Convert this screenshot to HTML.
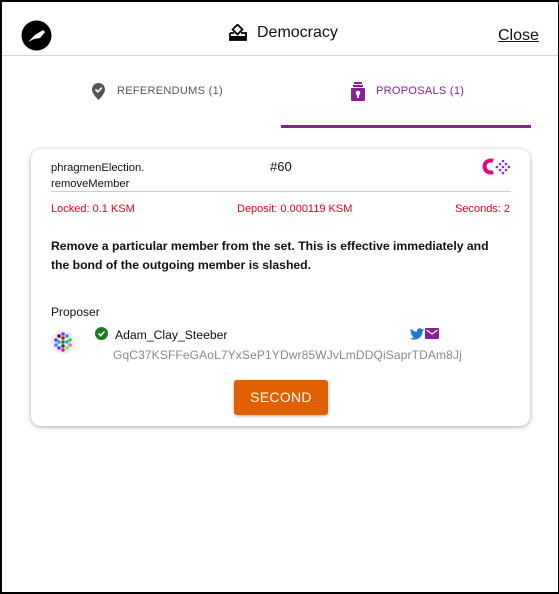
<!DOCTYPE html>
<html><head><meta charset="utf-8"><style>
*{box-sizing:border-box;margin:0;padding:0}
body{width:559px;height:594px;overflow:hidden;font-family:"Liberation Sans",sans-serif;background:#fff}
.frame{position:absolute;left:0;top:0;width:559px;height:594px;border:2px solid #000;border-right-width:1px}
.abs{position:absolute}
</style></head><body>
<div class="frame"></div>
<svg class="abs" style="left:21px;top:20px" width="31" height="31" viewBox="0 0 31 31"><circle cx="15.5" cy="15.5" r="15" fill="#000"/><path d="M7 22 L14 15 L22 10 L24 12 L19 18 L13 19 Z" fill="#fff"/></svg>
<svg class="abs" style="left:229px;top:24px" width="18" height="17" viewBox="0 0 18 17"><rect x="5" y="2" width="7" height="7" transform="rotate(45 8.5 5.5)" fill="none" stroke="#000" stroke-width="1.8"/><path d="M1 9 h4 M12 9 h5 v7 H1 v-7 M1 13 h16" stroke="#000" stroke-width="1.8" fill="none"/><rect x="1" y="12" width="16" height="4" fill="#000"/></svg>
<div class="abs" style="left:257px;top:24px;font-size:16px;color:#111">Democracy</div>
<div class="abs" style="left:498px;top:27px;font-size:16px;color:#111;text-decoration:underline">Close</div>
<div class="abs" style="left:2px;top:55px;width:556px;height:1px;background:#d6d6d6"></div>
<svg class="abs" style="left:92px;top:83px" width="13" height="17" viewBox="0 0 13 17"><path d="M6.5 0 C2.9 0 0 2.9 0 6.5 C0 11 6.5 17 6.5 17 C6.5 17 13 11 13 6.5 C13 2.9 10.1 0 6.5 0Z" fill="#555"/><path d="M3.5 6.5 L5.8 8.8 L9.8 4.6" stroke="#fff" stroke-width="1.6" fill="none"/></svg>
<div class="abs" style="left:117px;top:85px;font-size:11px;color:#555;letter-spacing:.3px">REFERENDUMS (1)</div>
<svg class="abs" style="left:351px;top:82px" width="14" height="19" viewBox="0 0 14 19"><rect x="3" y="0" width="8" height="2" fill="#8b1f96"/><rect x="2" y="3" width="10" height="2" fill="#8b1f96"/><rect x="0" y="6" width="14" height="13" rx="1" fill="#8b1f96"/><circle cx="7" cy="11" r="2.3" fill="#fff"/><rect x="6" y="12" width="2" height="4" fill="#fff"/></svg>
<div class="abs" style="left:376px;top:85px;font-size:11px;color:#8b1f96;letter-spacing:.3px">PROPOSALS (1)</div>
<div class="abs" style="left:281px;top:125px;width:250px;height:3px;background:#8b1f96"></div>
<div class="abs" style="left:31px;top:149px;width:499px;height:277px;border-radius:10px;box-shadow:0 1px 5px rgba(0,0,0,.35);background:#fff"></div>
<div class="abs" style="left:51px;top:160px;font-size:11.2px;line-height:16px;color:#111">phragmenElection.<br>removeMember</div>
<div class="abs" style="left:270px;top:159px;font-size:13px;color:#111">#60</div>
<svg class="abs" style="left:481px;top:158px" width="31" height="17" viewBox="0 0 31 17"><path d="M12 3 A6 6 0 1 0 12 14" stroke="#e6007a" stroke-width="4" fill="none"/><g fill="#8a2be2"><circle cx="22" cy="3" r="1.3"/><circle cx="19" cy="6" r="1.3"/><circle cx="25" cy="6" r="1.3"/><circle cx="16" cy="9" r="1.3"/><circle cx="28" cy="9" r="1.3"/><circle cx="19" cy="12" r="1.3"/><circle cx="25" cy="12" r="1.3"/><circle cx="22" cy="15" r="1.3"/><circle cx="22" cy="9" r="1.3"/></g></svg>
<div class="abs" style="left:51px;top:191px;width:460px;height:1px;background:#ccc"></div>
<div class="abs" style="left:51px;top:203px;font-size:11px;color:#e8001c">Locked: 0.1 KSM</div>
<div class="abs" style="left:237px;top:203px;font-size:11px;color:#e8001c">Deposit: 0.000119 KSM</div>
<div class="abs" style="left:455px;top:203px;font-size:11px;color:#e8001c">Seconds: 2</div>
<div class="abs" style="left:51px;top:237px;width:445px;font-size:12.2px;line-height:19px;font-weight:bold;color:#111">Remove a particular member from the set. This is effective immediately and the bond of the outgoing member is slashed.</div>
<div class="abs" style="left:51px;top:305px;font-size:12px;color:#111">Proposer</div>
<svg class="abs" style="left:51px;top:330px" width="24" height="24" viewBox="0 0 24 24"><circle cx="12" cy="12" r="12" fill="#eee"/><g><circle cx="12" cy="4" r="1.8" fill="#a020f0"/><circle cx="8" cy="6" r="1.8" fill="#222"/><circle cx="16" cy="6" r="1.8" fill="#1e90ff"/><circle cx="5" cy="10" r="1.8" fill="#a020f0"/><circle cx="12" cy="8" r="1.8" fill="#c8102e"/><circle cx="19" cy="10" r="1.8" fill="#32cd32"/><circle cx="8" cy="12" r="1.8" fill="#20b2aa"/><circle cx="16" cy="12" r="1.8" fill="#20b2aa"/><circle cx="12" cy="12" r="1.8" fill="#228b22"/><circle cx="5" cy="15" r="1.8" fill="#1e90ff"/><circle cx="19" cy="15" r="1.8" fill="#da70d6"/><circle cx="12" cy="16" r="1.8" fill="#1e3a8a"/><circle cx="8" cy="18" r="1.8" fill="#a020f0"/><circle cx="16" cy="18" r="1.8" fill="#7cfc00"/><circle cx="12" cy="20" r="1.8" fill="#c020c0"/></g></svg>
<svg class="abs" style="left:95px;top:327px" width="13" height="13" viewBox="0 0 13 13"><circle cx="6.5" cy="6.5" r="6.5" fill="#1b7a1b"/><path d="M3.5 6.5 L5.6 8.6 L9.5 4.5" stroke="#fff" stroke-width="1.6" fill="none"/></svg>
<div class="abs" style="left:115px;top:328px;font-size:12.2px;color:#111">Adam_Clay_Steeber</div>
<svg class="abs" style="left:410px;top:328px" width="14" height="12" viewBox="0 0 24 20"><path d="M24 2.4c-.9.4-1.8.7-2.8.8 1-.6 1.8-1.6 2.2-2.7-1 .6-2 1-3.1 1.2C19.4.7 18.1.1 16.7.1c-2.7 0-4.9 2.2-4.9 4.9 0 .4 0 .8.1 1.1C7.8 5.9 4.2 4 1.7 1 1.3 1.7 1 2.6 1 3.5c0 1.7.9 3.2 2.2 4.1-.8 0-1.6-.2-2.2-.6v.1c0 2.4 1.7 4.4 3.9 4.8-.4.1-.8.2-1.3.2-.3 0-.6 0-.9-.1.6 2 2.4 3.4 4.6 3.4-1.7 1.3-3.800 2.1-6.1 2.1-.4 0-.8 0-1.2-.1 2.2 1.4 4.8 2.2 7.5 2.2 9.1 0 14-7.5 14-14v-.6c1-.7 1.8-1.6 2.5-2.6z" fill="#1d7ad2"/></svg>
<svg class="abs" style="left:425px;top:328px" width="14" height="11" viewBox="0 0 14 11"><rect width="14" height="11" rx="1" fill="#8b1f96"/><path d="M1.5 2 L7 6 L12.5 2" stroke="#fff" stroke-width="1.3" fill="none"/></svg>
<div class="abs" style="left:113px;top:348px;font-size:12px;color:#888;letter-spacing:.13px">GqC37KSFFeGAoL7YxSeP1YDwr85WJvLmDDQiSaprTDAm8Jj</div>
<div class="abs" style="left:234px;top:380px;width:94px;height:35px;background:#e06000;border-radius:3px;box-shadow:0 1px 3px rgba(0,0,0,.3);color:#fff;font-size:14px;text-align:center;line-height:35px;letter-spacing:.3px">SECOND</div>
</body></html>
